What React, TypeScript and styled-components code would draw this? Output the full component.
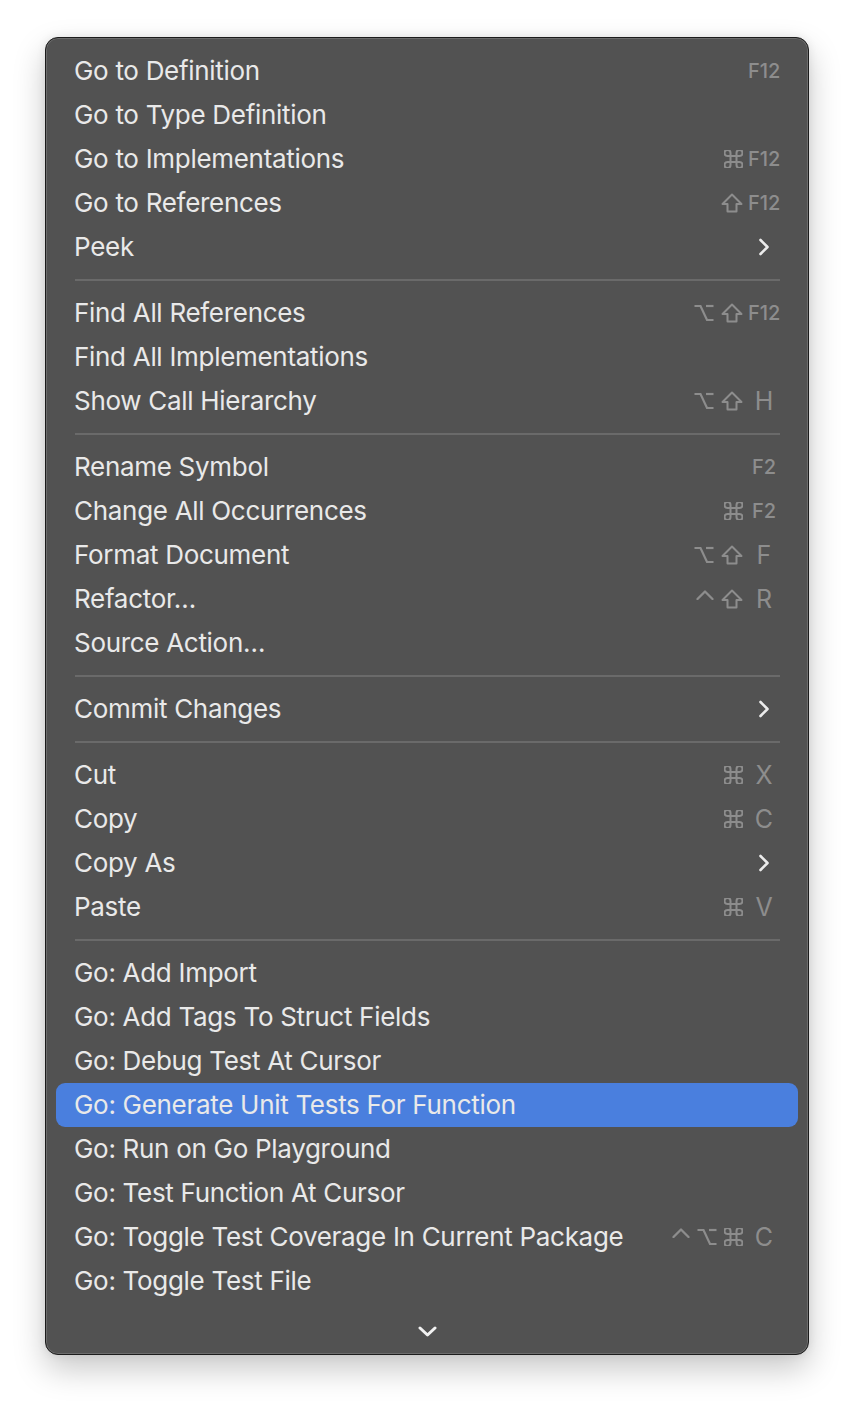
import React from "react";
import styled, { createGlobalStyle } from "styled-components";

const Global = createGlobalStyle`
  html, body { margin: 0; padding: 0; background: #ffffff; }
  body { width: 854px; height: 1408px; overflow: hidden; font-family: Inter, "Noto Sans", sans-serif; }
`;

const Page = styled.div`
  padding: 37px 0 0 45px;
`;

const Menu = styled.div`
  box-sizing: border-box;
  width: 764px;
  height: 1318px;
  background: #525252;
  border: 1px solid #1c1c1c;
  border-radius: 13px;
  box-shadow: inset 0 0 0 1px #6c6c6c, 0 14px 32px rgba(0, 0, 0, 0.22), 0 0 10px rgba(0, 0, 0, 0.08);
  padding: 11px 10px 0 10px;
  display: flex;
  flex-direction: column;
`;

const Row = styled.div<{ $active?: boolean }>`
  height: 44px;
  display: flex;
  align-items: center;
  padding: 0 18px 0 18px;
  border-radius: 9px;
  background: ${(p) => (p.$active ? "#4a7fde" : "transparent")};
`;

const Label = styled.span`
  flex: 1;
  font-size: 26px;
  line-height: 1;
  color: #e9e9e9;
  letter-spacing: -0.3px;
  white-space: nowrap;
`;

const Shortcut = styled.div`
  display: flex;
  align-items: center;
  gap: 5px;
`;

const Mods = styled.div`
  display: flex;
  align-items: center;
  gap: 7px;
  color: #8d8d8d;
`;

const Key = styled.span<{ $small?: boolean }>`
  width: 32px;
  text-align: center;
  color: #8d8d8d;
  font-size: ${(p) => (p.$small ? "20px" : "25px")};
  font-weight: ${(p) => (p.$small ? 500 : 400)};
  line-height: 1;
`;

const Sep = styled.div`
  height: 22px;
  display: flex;
  align-items: center;
  padding: 0 18px 0 19px;
  &::after {
    content: "";
    flex: 1;
    height: 2px;
    background: #6a6a6a;
  }
`;

const More = styled.div`
  height: 44px;
  padding-top: 6px;
  display: flex;
  align-items: center;
  justify-content: center;
`;

const Sym = styled.svg<{ $lift?: number }>`
  display: block;
  margin-bottom: ${(p) => p.$lift || 0}px;
`;

const stroke = "#8d8d8d";

const Cmd = () => (
  <Sym width="19" height="18" viewBox="3 3 18 18" fill="none" stroke={stroke} strokeWidth="2" strokeLinecap="round" strokeLinejoin="round">
    <path d="M15 6v12a3 3 0 1 0 3-3H6a3 3 0 1 0 3 3V6a3 3 0 1 0-3 3h12a3 3 0 1 0-3-3" />
  </Sym>
);

const Shift = () => (
  <Sym width="22" height="20" viewBox="0 0 22 20" fill="none" stroke={stroke} strokeWidth="2" strokeLinejoin="round">
    <path d="M11 1.5 L20.5 11 H15.5 V18.5 H6.5 V11 H1.5 Z" />
  </Sym>
);

const Opt = () => (
  <Sym width="20" height="18" viewBox="0 0 20 18" fill="none" stroke={stroke} strokeWidth="2.2" strokeLinecap="butt">
    <path d="M0.5 2 H6.5 L13 16 H19.5" />
    <path d="M12 2 H19.5" />
  </Sym>
);

const Ctrl = () => (
  <Sym $lift={8} width="18" height="10" viewBox="0 0 18 10" fill="none" stroke={stroke} strokeWidth="2.3" strokeLinecap="round" strokeLinejoin="round">
    <path d="M1.5 9 L9 1.5 L16.5 9" />
  </Sym>
);

const SubArrow = () => (
  <Sym width="12" height="18" viewBox="0 0 12 18" fill="none" stroke="#ececec" strokeWidth="2.6" strokeLinecap="round" strokeLinejoin="round">
    <path d="M2.5 2 L9.5 9 L2.5 16" />
  </Sym>
);

const DownArrow = () => (
  <Sym width="19" height="11" viewBox="0 0 19 11" fill="none" stroke="#f2f2f2" strokeWidth="3" strokeLinecap="round" strokeLinejoin="round">
    <path d="M2 2 L9.5 9 L17 2" />
  </Sym>
);

const SubWrap = styled.span`
  display: inline-flex;
  justify-content: center;
`;

type Mod = "ctrl" | "opt" | "shift" | "cmd";
type Item =
  | { sep: true }
  | { label: string; mods?: Mod[]; key?: string; sub?: boolean; active?: boolean };

const modIcon: Record<Mod, () => React.ReactElement> = {
  ctrl: Ctrl,
  opt: Opt,
  shift: Shift,
  cmd: Cmd,
};

const items: Item[] = [
  { label: "Go to Definition", key: "F12" },
  { label: "Go to Type Definition" },
  { label: "Go to Implementations", mods: ["cmd"], key: "F12" },
  { label: "Go to References", mods: ["shift"], key: "F12" },
  { label: "Peek", sub: true },
  { sep: true },
  { label: "Find All References", mods: ["opt", "shift"], key: "F12" },
  { label: "Find All Implementations" },
  { label: "Show Call Hierarchy", mods: ["opt", "shift"], key: "H" },
  { sep: true },
  { label: "Rename Symbol", key: "F2" },
  { label: "Change All Occurrences", mods: ["cmd"], key: "F2" },
  { label: "Format Document", mods: ["opt", "shift"], key: "F" },
  { label: "Refactor...", mods: ["ctrl", "shift"], key: "R" },
  { label: "Source Action..." },
  { sep: true },
  { label: "Commit Changes", sub: true },
  { sep: true },
  { label: "Cut", mods: ["cmd"], key: "X" },
  { label: "Copy", mods: ["cmd"], key: "C" },
  { label: "Copy As", sub: true },
  { label: "Paste", mods: ["cmd"], key: "V" },
  { sep: true },
  { label: "Go: Add Import" },
  { label: "Go: Add Tags To Struct Fields" },
  { label: "Go: Debug Test At Cursor" },
  { label: "Go: Generate Unit Tests For Function", active: true },
  { label: "Go: Run on Go Playground" },
  { label: "Go: Test Function At Cursor" },
  { label: "Go: Toggle Test Coverage In Current Package", mods: ["ctrl", "opt", "cmd"], key: "C" },
  { label: "Go: Toggle Test File" },
];

export default function App() {
  return (
    <Page>
      <Global />
      <Menu>
        {items.map((it, i) => {
          if ("sep" in it) return <Sep key={i} />;
          return (
            <Row key={i} $active={it.active}>
              <Label>{it.label.replace("...", "\u2026")}</Label>
              {(it.key || it.sub) && (
                <Shortcut>
                  {it.mods && (
                    <Mods>
                      {it.mods.map((m) => {
                        const Icon = modIcon[m];
                        return <Icon key={m} />;
                      })}
                    </Mods>
                  )}
                  <Key $small={!!it.key && it.key.length > 1}>
                    {it.sub ? (
                      <SubWrap>
                        <SubArrow />
                      </SubWrap>
                    ) : (
                      it.key
                    )}
                  </Key>
                </Shortcut>
              )}
            </Row>
          );
        })}
        <More>
          <DownArrow />
        </More>
      </Menu>
    </Page>
  );
}
